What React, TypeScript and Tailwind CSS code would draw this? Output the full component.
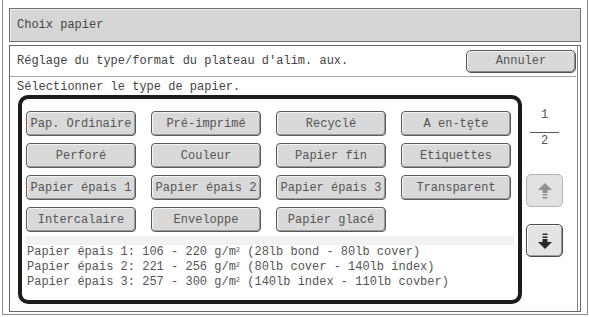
import * as React from 'react';

const mono = { fontFamily: '"Liberation Mono", "DejaVu Sans Mono", monospace' };

const paperTypes: string[][] = [
  ['Pap. Ordinaire', 'Pré-imprimé', 'Recyclé', 'A en-tęte'],
  ['Perforé', 'Couleur', 'Papier fin', 'Etiquettes'],
  ['Papier épais 1', 'Papier épais 2', 'Papier épais 3', 'Transparent'],
  ['Intercalaire', 'Enveloppe', 'Papier glacé'],
];

const infoLines = [
  ['Papier épais 1: 106 - 220 g/m', '(28lb bond - 80lb cover)'],
  ['Papier épais 2: 221 - 256 g/m', '(80lb cover - 140lb index)'],
  ['Papier épais 3: 257 - 300 g/m', '(140lb index - 110lb covber)'],
];

function PaperButton({ label }: { label: string }) {
  return (
    <button className="flex h-[25px] w-[110px] items-center justify-center whitespace-nowrap rounded-[4px] border border-[#5a5a5a] bg-[#d9d9d9] text-[12px] leading-none text-[#555] shadow-[inset_-1px_-1px_0_#9a9a9a,inset_1px_1px_0_#f4f4f4]">
      {label}
    </button>
  );
}

function ArrowIcon({ down, color }: { down?: boolean; color: string }) {
  return (
    <svg width="14" height="16" viewBox="0 0 14 16" className={down ? 'rotate-180' : ''}>
      <polygon points="7,0 14,7 0,7" fill={color} />
      <rect x="4.5" y="7" width="5" height="3" fill={color} />
      <rect x="4.5" y="11" width="5" height="1.5" fill={color} />
      <rect x="4.5" y="14" width="5" height="1.5" fill={color} />
    </svg>
  );
}

export default function App() {
  return (
    <div className="h-[317px] w-[589px] bg-white text-[#444]" style={mono}>
      <div className="ml-[2px] h-[315px] w-[586px] border border-t-0 border-[#8c8c8c] px-[6px] pt-[8px]">
        <div className="flex h-[34px] items-center border border-[#707070] bg-[#d6d6d6] pl-[7px] text-[12px] shadow-[inset_1px_1px_0_#eee]">
          Choix papier
        </div>

        <div className="mt-[3px] h-[267px] border border-[#666] bg-white shadow-[inset_-2px_0_0_#fff,inset_-3px_0_0_#888]">
          <div className="mr-[4px] flex h-[31px] items-center justify-between border-b border-[#a8a8a8] pl-[7px] text-[12px]">
            <span>Réglage du type/format du plateau d'alim. aux.</span>
            <button className="flex h-[23px] w-[110px] items-center justify-center rounded-[5px] border border-[#555] bg-[#d9d9d9] text-[12px] text-[#555] shadow-[inset_-1px_-1px_0_#8a8a8a,inset_1px_1px_0_#f4f4f4]">
              Annuler
            </button>
          </div>

          <div className="h-[18px] pl-[7px] pt-[3px] text-[12px] leading-[15px]">Sélectionner le type de papier.</div>

          <div className="flex">
            <div className="ml-[8px] h-[209px] w-[504px] rounded-[10px] border-[4px] border-[#1c1c1c] pl-[4px] pt-[12px]">
              <div className="flex flex-col gap-[7px]">
                {paperTypes.map((row, i) => (
                  <div key={i} className="flex gap-[15px]">
                    {row.map((label) => (
                      <PaperButton key={label} label={label} />
                    ))}
                  </div>
                ))}
              </div>
              <div className="mr-[4px] mt-[4px] h-[9px] bg-[#f2f2f2]" />
              <div className="pl-[1px] text-[12px] leading-[15px] text-[#555]">
                {infoLines.map(([a, b]) => (
                  <div key={a} className="whitespace-pre">
                    {a}
                    <sup className="text-[7px]">2</sup> {b}
                  </div>
                ))}
              </div>
            </div>

            <div className="ml-[4px] flex w-[37px] flex-col items-center pt-[12px] text-[12px] text-[#555]">
              <div className="flex w-[29px] flex-col items-center">
                <span className="leading-[16px]">1</span>
                <div className="mt-[9px] h-px w-[29px] bg-[#555]" />
                <span className="leading-[16px]">2</span>
              </div>
              <button className="mt-[25px] flex h-[33px] w-[37px] items-center justify-center rounded-[5px] border border-[#b4b4b4] bg-[#e2e2e2]">
                <ArrowIcon color="#8f8f8f" />
              </button>
              <button className="mt-[17px] flex h-[33px] w-[37px] items-center justify-center rounded-[5px] border border-[#4a4a4a] bg-[#e4e4e4] shadow-[inset_-1px_-1px_0_#999,inset_1px_1px_0_#fafafa]">
                <ArrowIcon down color="#2a2a2a" />
              </button>
            </div>
          </div>
        </div>
      </div>
    </div>
  );
}
